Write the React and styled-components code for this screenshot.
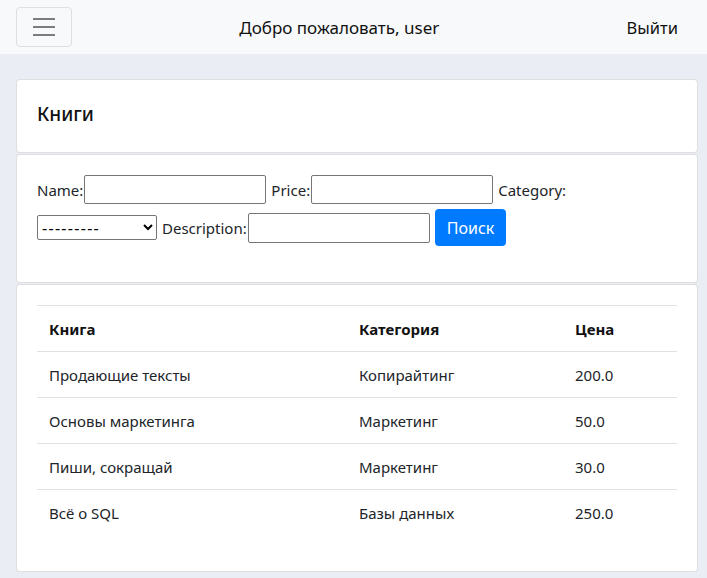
import React from 'react';
import styled, { createGlobalStyle } from 'styled-components';

const GlobalStyle = createGlobalStyle`
    body {
        margin: 0;
        background-color: #eaedf4;
        font-family: "Noto Sans", "Open Sans", sans-serif;
        font-size: 16px;
        color: #212529;
    }
`;

const NavBar = styled.nav`
    display: flex;
    align-items: center;
    height: 54px;
    padding: 0 29px 0 16px;
    background-color: #f8f9fa;
`;

const Toggler = styled.button`
    display: flex;
    align-items: center;
    justify-content: center;
    width: 56px;
    height: 40px;
    padding: 0;
    background: transparent;
    border: 1px solid rgba(0, 0, 0, 0.1);
    border-radius: 4px;
`;

const Greeting = styled.div`
    flex: 1;
    text-align: center;
    padding-right: 20px;
    font-size: 17px;
    color: #111;
`;

const Logout = styled.a`
    font-size: 16.5px;
    color: #111;
    text-decoration: none;
`;

const Main = styled.main`
    padding: 25px 9px 6px 16px;
`;

const Card = styled.section`
    background-color: white;
    border: 1px solid rgba(0, 0, 0, 0.125);
    border-radius: 4px;
    padding: 20px;

    & + & {
        margin-top: 1px;
    }
`;

const Title = styled.h5`
    margin: 0;
    padding: 3px 0 7px;
    font-size: 19px;
    font-weight: 500;
    line-height: 22px;
    color: #111;
`;

const SearchForm = styled.form`
    display: flex;
    flex-wrap: wrap;
    align-items: center;
    column-gap: 5px;
    row-gap: 5px;
    margin-bottom: 16px;
    font-size: 15px;
`;

const Field = styled.label`
    display: inline-flex;
    align-items: center;
`;

const TextInput = styled.input`
    box-sizing: border-box;
    width: 182px;
    height: ${(p) => p.$h || 29}px;
    margin-left: 1px;
    border: 1px solid #767676;
    border-radius: 2px;
    font: inherit;
`;

const Select = styled.select`
    box-sizing: border-box;
    width: 120px;
    height: 25px;
    border: 1px solid #767676;
    border-radius: 2px;
    background: white;
    font-family: inherit;
    font-size: 16px;
    letter-spacing: 1.3px;
    color: #000;
`;

const SearchButton = styled.button`
    height: 37px;
    padding: 0 12px;
    background-color: #007bff;
    color: white;
    border: none;
    border-radius: 4px;
    font-family: inherit;
    font-size: 16px;
`;

const Table = styled.table`
    width: 100%;
    border-collapse: collapse;
    margin-bottom: 16px;
`;

const HeadCell = styled.th`
    height: 45px;
    padding: 0 12px;
    text-align: left;
    font-weight: 700;
    font-size: 15px;
    color: #111;
    width: ${(p) => p.$w || 'auto'};
    border-top: 1px solid #dee2e6;
    border-bottom: 1px solid #dee2e6;
`;

const Row = styled.tr`
    & + & td {
        border-top: 1px solid #dee2e6;
    }
`;

const Cell = styled.td`
    height: 45px;
    padding: 0 12px;
    font-size: 15px;
`;

const books = [
    { title: 'Продающие тексты', category: 'Копирайтинг', price: '200.0' },
    { title: 'Основы маркетинга', category: 'Маркетинг', price: '50.0' },
    { title: 'Пиши, сокращай', category: 'Маркетинг', price: '30.0' },
    { title: 'Всё о SQL', category: 'Базы данных', price: '250.0' },
];

const App = () => {
    return (
        <>
            <GlobalStyle />
            <NavBar>
                <Toggler aria-label="menu">
                    <svg width="30" height="30" viewBox="0 0 30 30">
                        <path
                            d="M4 7h22M4 15h22M4 23h22"
                            stroke="rgba(0,0,0,0.5)"
                            strokeWidth="2"
                        />
                    </svg>
                </Toggler>
                <Greeting>Добро пожаловать, user</Greeting>
                <Logout href="#">Выйти</Logout>
            </NavBar>
            <Main>
                <Card>
                    <Title>Книги</Title>
                </Card>
                <Card>
                    <SearchForm onSubmit={(e) => e.preventDefault()}>
                        <Field>
                            Name:<TextInput type="text" />
                        </Field>
                        <Field>
                            Price:<TextInput type="text" />
                        </Field>
                        <span>Category:</span>
                        <Select defaultValue="">
                            <option value="">---------</option>
                            <option value="1">Копирайтинг</option>
                            <option value="2">Маркетинг</option>
                            <option value="3">Базы данных</option>
                        </Select>
                        <Field>
                            Description:<TextInput type="text" $h={30} />
                        </Field>
                        <SearchButton type="submit">Поиск</SearchButton>
                    </SearchForm>
                </Card>
                <Card>
                    <Table>
                        <thead>
                            <tr>
                                <HeadCell $w="286px">Книга</HeadCell>
                                <HeadCell $w="192px">Категория</HeadCell>
                                <HeadCell>Цена</HeadCell>
                            </tr>
                        </thead>
                        <tbody>
                            {books.map((b) => (
                                <Row key={b.title}>
                                    <Cell>{b.title}</Cell>
                                    <Cell>{b.category}</Cell>
                                    <Cell>{b.price}</Cell>
                                </Row>
                            ))}
                        </tbody>
                    </Table>
                </Card>
            </Main>
        </>
    );
};

export default App;
